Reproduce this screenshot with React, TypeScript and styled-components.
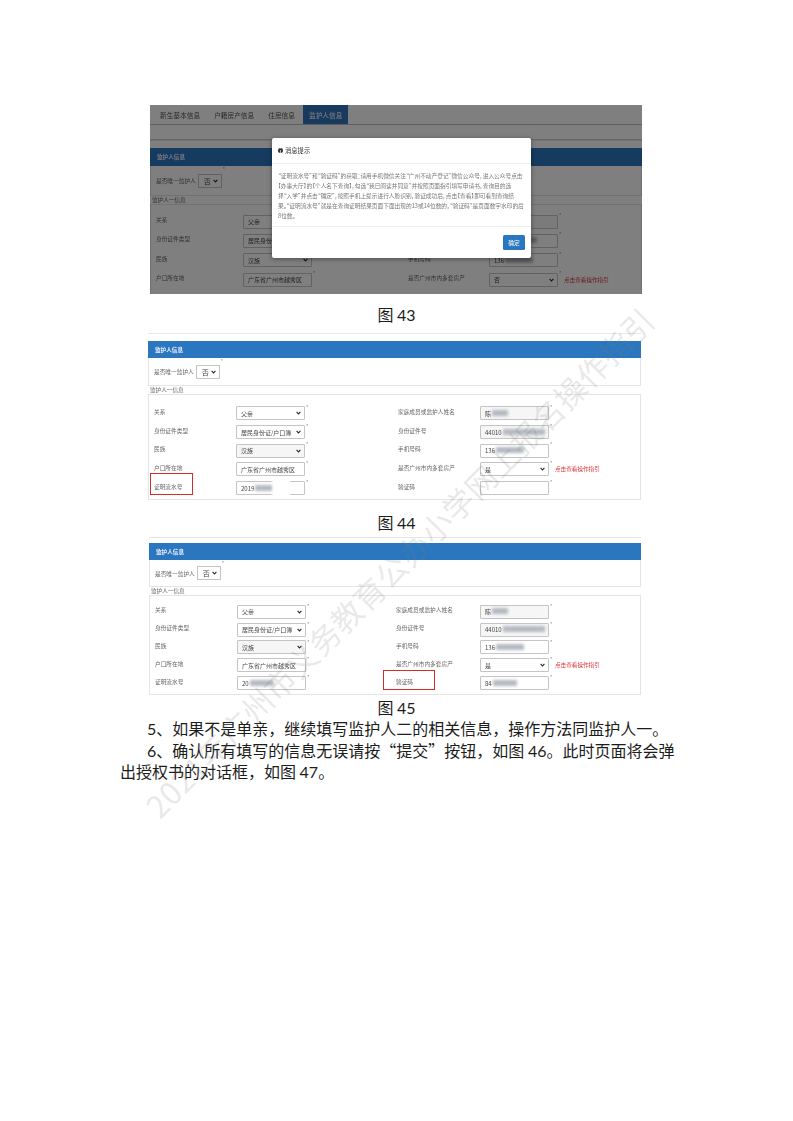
import React from "react";
import styled, { createGlobalStyle } from "styled-components";

const GlobalStyle = createGlobalStyle`
  html, body {
    margin: 0;
    padding: 0;
    background: #fff;
  }
  body {
    font-family: "Noto Sans CJK SC", sans-serif;
  }
`;

const Page = styled.div`
  position: relative;
  width: 793px;
  height: 1121px;
  padding-top: 105px;
  box-sizing: border-box;
  overflow: hidden;
  background: #fff;
  color: #1c1c1c;
`;

const Watermark = styled.div`
  position: absolute;
  left: 399px;
  top: 562px;
  transform: translate(-50%, -50%) rotate(-45deg);
  white-space: nowrap;
  font-size: 31px;
  letter-spacing: 0.6px;
  color: rgba(120, 120, 120, 0.18);
  pointer-events: none;
  z-index: 3;
`;

const Shot = styled.div<{ $left: number; $width: number; $height: number }>`
  position: relative;
  margin-left: ${(p) => p.$left}px;
  width: ${(p) => p.$width}px;
  height: ${(p) => p.$height}px;
  overflow: hidden;
  background: #fff;
  font-size: 5.7px;
  color: #666;
  filter: blur(0.4px);
`;

const Caption = styled.div<{ $top: number; $bottom: number }>`
  margin: ${(p) => p.$top}px 0 ${(p) => p.$bottom}px;
  text-align: center;
  font-size: 16px;
  line-height: 20px;
`;

const Num = styled.span`
  font-family: Lato, sans-serif;
  line-height: 0;
`;

const Tabs = styled.div`
  display: flex;
  height: 19px;
  padding-left: 4px;
  border-bottom: 1px solid #bbb;
  font-size: 6.7px;
  align-items: stretch;
`;

const Tab = styled.div<{ $active?: boolean }>`
  display: flex;
  align-items: center;
  padding: 0 6px;
  margin-right: 2px;
  background: ${(p) => (p.$active ? "#2f75bd" : "transparent")};
  color: ${(p) => (p.$active ? "#fff" : "#555")};
`;

const SubBar = styled.div`
  height: 14px;
  border-bottom: 1px solid #ccc;
`;

const Form = styled.div<{ $top: number }>`
  padding-top: ${(p) => p.$top}px;
  box-shadow: inset 0 1px 0 #e6e6e6;
`;

const BlueBar = styled.div<{ $height: number }>`
  display: flex;
  align-items: center;
  height: ${(p) => p.$height}px;
  padding-left: 7px;
  background: #2a77c0;
  color: #eef;
  font-size: 5.6px;
  font-weight: 700;
`;

const OnlyRow = styled.div<{ $height: number }>`
  display: flex;
  align-items: center;
  height: ${(p) => p.$height}px;
  padding-left: 5px;
  border: 1px solid #e4e4e4;
  border-top: 0;
  box-sizing: border-box;
`;

const SmallSelect = styled.div`
  display: flex;
  align-items: center;
  justify-content: space-between;
  width: 24px;
  height: 14px;
  margin-left: 2px;
  padding: 0 3px 0 5px;
  box-sizing: border-box;
  border: 1px solid #c4c4c4;
  font-size: 7px;
  color: #444;
`;

const Legend = styled.div`
  height: 8px;
  line-height: 8px;
  padding-left: 2px;
  font-size: 5.6px;
`;

const Fieldset = styled.div<{ $pad: number; $height: number }>`
  height: ${(p) => p.$height}px;
  padding-top: ${(p) => p.$pad}px;
  border: 1px solid #e4e4e4;
  box-sizing: border-box;
`;

const Row = styled.div<{ $height: number }>`
  display: flex;
  align-items: center;
  height: ${(p) => p.$height}px;
`;

const Label = styled.div<{ $width: number }>`
  width: ${(p) => p.$width}px;
  flex: none;
  margin-bottom: 4px;
  padding-left: 5px;
  box-sizing: border-box;
  white-space: nowrap;
`;

const Control = styled.div<{ $dim?: boolean }>`
  display: flex;
  align-items: center;
  justify-content: space-between;
  flex: none;
  width: 69px;
  height: 14px;
  padding: 0 3px 0 4px;
  box-sizing: border-box;
  border: 1px solid #c4c4c4;
  border-radius: 1px;
  background: ${(p) => (p.$dim ? "#f6f6f6" : "#fff")};
  color: #444;
  font-size: 6px;
  white-space: nowrap;
`;

const Star = styled.span`
  flex: none;
  width: 3px;
  margin-left: 1px;
  align-self: flex-start;
  color: #888;
  font-size: 5px;
  line-height: 6px;
`;

const Spacer = styled.div<{ $width: number }>`
  flex: none;
  width: ${(p) => p.$width}px;
`;

const Hint = styled.span`
  margin-left: 2px;
  color: #d8363a;
  font-size: 5.6px;
  white-space: nowrap;
`;

const Blurred = styled.span<{ $width: number }>`
  display: inline-block;
  width: ${(p) => p.$width}px;
  height: 6px;
  margin-left: 1px;
  background: #b4b9c2;
  filter: blur(1.4px);
`;

const Mark = styled.div<{ $left: number; $top: number; $width: number; $height: number }>`
  position: absolute;
  left: ${(p) => p.$left}px;
  top: ${(p) => p.$top}px;
  width: ${(p) => p.$width}px;
  height: ${(p) => p.$height}px;
  border: 1.5px solid #d42a2a;
  box-sizing: border-box;
`;

const Smudge = styled.div`
  position: absolute;
  left: 124px;
  top: 146px;
  width: 18px;
  height: 18px;
  background: #fff;
  filter: blur(1px);
`;

const Dim = styled.div`
  position: absolute;
  inset: 0;
  background: rgba(0, 0, 0, 0.5);
`;

const Modal = styled.div`
  position: absolute;
  left: 122px;
  top: 33px;
  display: flex;
  flex-direction: column;
  width: 259px;
  height: 120px;
  background: #fff;
  border-radius: 2px;
  box-shadow: 0 1px 5px rgba(0, 0, 0, 0.4);
`;

const ModalHead = styled.div`
  display: flex;
  align-items: center;
  gap: 2px;
  height: 25px;
  padding-left: 6px;
  border-bottom: 1px solid #eee;
  font-size: 6.3px;
  color: #333;
`;

const InfoDot = styled.span`
  display: inline-flex;
  align-items: center;
  justify-content: center;
  width: 5px;
  height: 5px;
  border-radius: 50%;
  background: #333;
  color: #fff;
  font-size: 4px;
  font-weight: 700;
`;

const ModalBody = styled.div`
  flex: 1;
  padding: 7px 6px 0;
  border-bottom: 1px solid #eee;
  font-size: 5.7px;
  line-height: 10px;
  font-feature-settings: "palt";
  color: #777;
`;

const ModalFoot = styled.div`
  display: flex;
  align-items: center;
  justify-content: flex-end;
  height: 31px;
  padding-right: 6px;
`;

const ConfirmButton = styled.div`
  display: flex;
  align-items: center;
  justify-content: center;
  width: 22px;
  height: 15px;
  border-radius: 1.5px;
  background: #2a77c0;
  color: #fff;
  font-size: 5.7px;
`;

const Paragraph = styled.p`
  width: 556px;
  margin: 0 0 0 120px;
  text-indent: 27px;
  font-size: 16px;
  line-height: 21.5px;
  color: #1c1c1c;
`;

function Caret() {
  return (
    <svg width="5" height="4" viewBox="0 0 5 4">
      <path d="M0.6 0.8 L2.5 3 L4.4 0.8" fill="none" stroke="#222" strokeWidth="1.1" />
    </svg>
  );
}

interface Field {
  label: string;
  value?: string;
  hidden?: number;
  select?: boolean;
  dim?: boolean;
  hint?: boolean;
}

const ROWS: [Field, Field][] = [
  [
    { label: "关系", value: "父亲", select: true },
    { label: "家庭成员或监护人姓名", value: "陈", hidden: 16, dim: true },
  ],
  [
    { label: "身份证件类型", value: "居民身份证/户口簿", select: true },
    { label: "身份证件号", value: "44010", hidden: 42, dim: true },
  ],
  [
    { label: "民族", value: "汉族", select: true, dim: true },
    { label: "手机号码", value: "136", hidden: 28 },
  ],
  [
    { label: "户口所在地", value: "广东省广州市越秀区" },
    { label: "是否广州市内多套房产", value: "是", select: true, hint: true },
  ],
  [
    { label: "证明流水号", value: "2019", hidden: 20 },
    { label: "验证码" },
  ],
];

const ROWS_43: [Field, Field][] = [
  [
    { label: "关系", value: "父亲", select: true },
    { label: "", value: "", dim: true },
  ],
  [
    { label: "身份证件类型", value: "居民身份证/户口簿", select: true },
    { label: "身份证件号", value: "", hidden: 42 },
  ],
  [
    { label: "民族", value: "汉族", select: true },
    { label: "手机号码", value: "136", hidden: 28 },
  ],
  [
    { label: "户口所在地", value: "广东省广州市越秀区" },
    { label: "是否广州市内多套房产", value: "否", select: true, hint: true },
  ],
];

const ROWS_45: [Field, Field][] = ROWS.map(([l, r], i) =>
  i === 4
    ? [
        { label: l.label, value: "20", hidden: 24 },
        { label: r.label, value: "84", hidden: 24 },
      ]
    : [l, r]
) as [Field, Field][];

function FieldCell({ field }: { field: Field }) {
  return (
    <>
      <Control $dim={field.dim}>
        <span>
          {field.value}
          {field.hidden ? <Blurred $width={field.hidden} /> : null}
        </span>
        {field.select ? <Caret /> : null}
      </Control>
      <Star>*</Star>
      {field.hint ? <Hint>点击查看操作指引</Hint> : null}
    </>
  );
}

interface GuardianFormProps {
  top: number;
  barHeight: number;
  onlyHeight: number;
  rowHeight: number;
  labelWidth: number;
  gapWidth: number;
  rightLabel: number;
  boxPad: number;
  boxHeight: number;
  rows?: [Field, Field][];
}

function GuardianForm(props: GuardianFormProps) {
  const { top, barHeight, onlyHeight, rowHeight, labelWidth, gapWidth, rightLabel, boxPad, boxHeight } = props;
  const rows = props.rows ?? ROWS;
  return (
    <Form $top={top}>
      <BlueBar $height={barHeight}>监护人信息</BlueBar>
      <OnlyRow $height={onlyHeight}>
        是否唯一监护人
        <SmallSelect>
          否<Caret />
        </SmallSelect>
        <Star>*</Star>
      </OnlyRow>
      <Legend>监护人一信息</Legend>
      <Fieldset $pad={boxPad} $height={boxHeight}>
        {rows.map(([left, right]) => (
          <Row key={left.label} $height={rowHeight}>
            <Label $width={labelWidth}>{left.label}</Label>
            <FieldCell field={left} />
            <Spacer $width={gapWidth} />
            <Label $width={rightLabel}>{right.label}</Label>
            <FieldCell field={right} />
          </Row>
        ))}
      </Fieldset>
    </Form>
  );
}

export default function App() {
  return (
    <Page>
      <GlobalStyle />
      <Shot $left={150} $width={492} $height={189}>
        <Tabs>
          <Tab>新生基本信息</Tab>
          <Tab>户籍房产信息</Tab>
          <Tab>住房信息</Tab>
          <Tab $active>监护人信息</Tab>
        </Tabs>
        <SubBar />
        <GuardianForm
          top={8}
          barHeight={18}
          onlyHeight={30}
          rowHeight={19.3}
          labelWidth={92}
          gapWidth={87}
          rightLabel={86}
          boxPad={7}
          boxHeight={100}
          rows={ROWS_43}
        />
        <Dim />
        <Modal>
          <ModalHead>
            <InfoDot>i</InfoDot>
            消息提示
          </ModalHead>
          <ModalBody>
            “证明流水号”和“验证码”的获取：请用手机微信关注“广州不动产登记”微信公众号，进入公众号点击【办事大厅】的【个人名下查询】，勾选“我已阅读并同意”并按照页面指引填写申请书，查询目的选择“入学”并点击“确定”，按照手机上提示进行人脸识别，验证成功后，点击【查看】即可看到查询结果。“证明流水号”就是在查询证明结果页面下面出现的13或14位数的，“验证码”是页面数字水印的后8位数。
          </ModalBody>
          <ModalFoot>
            <ConfirmButton>确定</ConfirmButton>
          </ModalFoot>
        </Modal>
      </Shot>
      <Caption $top={10} $bottom={9}>
        图 <Num>43</Num>
      </Caption>
      <Shot $left={148} $width={493} $height={172}>
        <GuardianForm
          top={8}
          barHeight={17}
          onlyHeight={28}
          rowHeight={18.7}
          labelWidth={87}
          gapWidth={84}
          rightLabel={87}
          boxPad={9}
          boxHeight={106}
        />
        <Smudge />
        <Mark $left={2} $top={140} $width={43} $height={22} />
      </Shot>
      <Caption $top={7} $bottom={5}>
        图 <Num>44</Num>
      </Caption>
      <Shot $left={149} $width={492} $height={158}>
        <GuardianForm
          top={6}
          barHeight={17}
          onlyHeight={27}
          rowHeight={17.8}
          labelWidth={87}
          gapWidth={81}
          rightLabel={89}
          boxPad={7}
          boxHeight={100}
          rows={ROWS_45}
        />
        <Mark $left={234} $top={133} $width={52} $height={20} />
      </Shot>
      <Caption $top={2} $bottom={1}>
        图 <Num>45</Num>
      </Caption>
      <Paragraph>
        <Num>5</Num>、如果不是单亲，继续填写监护人二的相关信息，操作方法同监护人一。
      </Paragraph>
      <Paragraph>
        <Num>6</Num>、确认所有填写的信息无误请按“提交”按钮，如图 <Num>46</Num>。此时页面将会弹出授权书的对话框，如图 <Num>47</Num>。
      </Paragraph>
      <Watermark>2021年广州市义务教育公办小学网上报名操作指引</Watermark>
    </Page>
  );
}
